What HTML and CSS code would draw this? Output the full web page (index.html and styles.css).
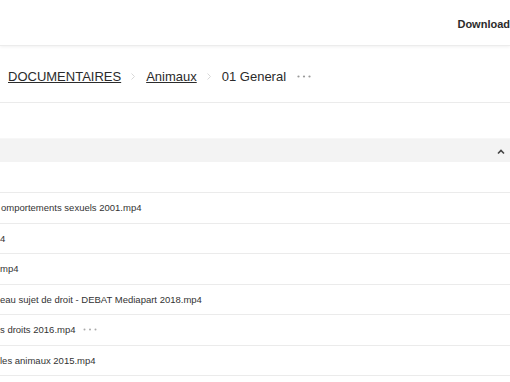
FILE: index.html
```html
<!DOCTYPE html>
<html lang="fr">
  <head>
    <meta charset="UTF-8">
    <meta name="viewport" content="width=device-width, initial-scale=1.0">
    <title>01 General</title>
    <link rel="stylesheet" href="styles.css">
  </head>
  <body>
    <div class="entete">
      <span class="telecharger">Download</span>
    </div>

    <div class="fil">
      <a href="#">DOCUMENTAIRES</a>
      <svg class="sep" width="4" height="7" viewBox="0 0 4 7"><path d="M0.5 0.5 L3.5 3.5 L0.5 6.5" fill="none" stroke="#d8d8d8" stroke-width="1"/></svg>
      <a href="#">Animaux</a>
      <svg class="sep" width="4" height="7" viewBox="0 0 4 7"><path d="M0.5 0.5 L3.5 3.5 L0.5 6.5" fill="none" stroke="#d8d8d8" stroke-width="1"/></svg>
      <span class="courant">01 General</span>
      <svg class="points" width="14" height="3" viewBox="0 0 14 3"><circle cx="1.5" cy="1.5" r="1.1" fill="#999"/><circle cx="7" cy="1.5" r="1.1" fill="#999"/><circle cx="12.5" cy="1.5" r="1.1" fill="#999"/></svg>
    </div>

    <div class="vide"></div>

    <div class="bandeau">
      <svg width="8" height="6" viewBox="0 0 8 6"><path d="M1 4.5 L4 1.5 L7 4.5" fill="none" stroke="#444" stroke-width="1.6"/></svg>
    </div>

    <div class="vide2"></div>

    <!-- liste des fichiers -->
    <div class="liste">
      <div class="ligne"><span class="nom nom-coupe">omportements sexuels 2001.mp4</span></div>
      <div class="ligne"><span class="nom">4</span></div>
      <div class="ligne"><span class="nom">mp4</span></div>
      <div class="ligne"><span class="nom">eau sujet de droit - DEBAT Mediapart 2018.mp4</span></div>
      <div class="ligne"><span class="nom">s droits 2016.mp4</span>
        <svg class="points petits" width="14" height="3" viewBox="0 0 14 3"><circle cx="1.5" cy="1.5" r="1" fill="#aaa"/><circle cx="7" cy="1.5" r="1" fill="#aaa"/><circle cx="12.5" cy="1.5" r="1" fill="#aaa"/></svg>
      </div>
      <div class="ligne"><span class="nom">les animaux 2015.mp4</span></div>
      <div class="ligne"></div>
    </div>
  </body>
</html>
```

FILE: styles.css
```css
body {
  margin: 0;
  font-family: 'Liberation Sans', Arial, sans-serif;
  background-color: #ffffff;
  color: #333;
  overflow: hidden;
}
.entete {
  height: 45px;
  display: flex;
  align-items: center;
  justify-content: flex-end;
  border-bottom: 1px solid #ececec;
  box-shadow: 0 1px 3px rgba(0, 0, 0, 0.06);
}
.telecharger {
  font-size: 11px;
  font-weight: bold;
  color: #2b2b2b;
  padding-top: 2px;
}
.fil {
  height: 57px;
  display: flex;
  align-items: center;
  padding-left: 8px;
  padding-top: 4px;
  box-sizing: border-box;
  font-size: 13px;
  border-bottom: 1px solid #ebebeb;
}
.fil a { color: #2b2b2b; text-decoration: underline; }
.fil .sep { margin: 0 11px 0 10px; }
.courant { color: #2b2b2b; }
.points { margin-left: 11px; }
.vide { height: 35px; }
.bandeau {
  height: 24px;
  background-color: #f3f3f3;
  border-top: 1px solid #f7f7f7;
  display: flex;
  align-items: center;
  justify-content: flex-end;
  padding-right: 5px;
  padding-top: 2px;
  box-sizing: border-box;
}
.vide2 { height: 30px; }
.liste { border-top: 1px solid #ebebeb; }
.ligne {
  height: 29.5px;
  display: flex;
  align-items: center;
  border-bottom: 1px solid #ebebeb;
  font-size: 9.5px;
  color: #333;
}
.nom-coupe { margin-left: 1px; }
.points.petits { margin-left: 7px; }
```
